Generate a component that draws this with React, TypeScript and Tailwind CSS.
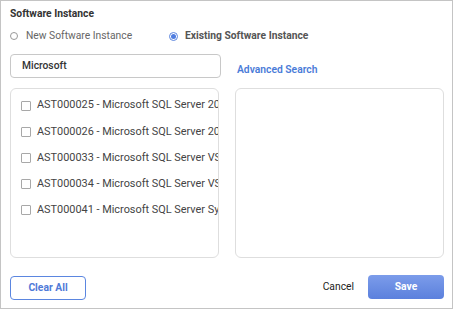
import React from 'react';

const items = [
  'AST000025 - Microsoft SQL Server 2019 Standard',
  'AST000026 - Microsoft SQL Server 2017 Enterprise',
  'AST000033 - Microsoft SQL Server VSS Writer',
  'AST000034 - Microsoft SQL Server VSS Writer 2019',
  'AST000041 - Microsoft SQL Server System CLR Types',
];

export default function App() {
  return (
    <div
      className="w-[453px] h-[309px] bg-white border border-[#c4c4c4] flex flex-col pl-[9px] pr-[8px] pt-[6px] text-[10.3px] text-[#333]"
      style={{ fontFamily: 'Roboto, "Liberation Sans", sans-serif' }}
    >
      {/* Title */}
      <div className="h-[13px] leading-[13px] font-bold text-[#333]">Software Instance</div>

      {/* Radios */}
      <div className="flex items-center h-[14px] mt-[9px]">
        <label className="flex items-center w-[159px]">
          <span className="w-[8px] h-[8px] rounded-full border border-[#999] bg-white" />
          <span className="ml-[8px] text-[#666]">New Software Instance</span>
        </label>
        <label className="flex items-center">
          <span className="w-[9px] h-[9px] rounded-full border border-[#5b85de] flex items-center justify-center">
            <span className="w-[5px] h-[5px] rounded-full bg-[#4f7de0]" />
          </span>
          <span className="ml-[7px] font-bold text-[#555]">Existing Software Instance</span>
        </label>
      </div>

      {/* Search row */}
      <div className="flex items-center mt-[11px]">
        <div className="w-[211px] h-[24px] border border-[#c8c8c8] rounded-[4px] flex items-center pl-[11px] font-medium text-[#333]">
          Microsoft
        </div>
        <span className="ml-[16px] mt-[8px] font-semibold text-[#4a7bd8]">Advanced Search</span>
      </div>

      {/* Lists */}
      <div className="flex gap-[16px] mt-[10px]">
        <div className="w-[209px] h-[170px] border border-[#dedede] rounded-[6px] pl-[10px] pt-[3px] overflow-hidden text-[10.9px]">
          {items.map((t, i) => (
            <div key={t} className={`flex items-center whitespace-nowrap ${i === 0 ? 'h-[27px]' : 'h-[26px]'}`}>
              <span className="w-[10px] h-[10px] shrink-0 border border-[#a8a8a8] rounded-[1px] bg-white" />
              <span className="ml-[6px] text-[#444]">{t}</span>
            </div>
          ))}
        </div>
        <div className="w-[209px] h-[170px] border border-[#dedede] rounded-[6px]" />
      </div>

      {/* Footer */}
      <div className="flex items-center mt-[15px]">
        <button className="w-[76px] h-[24px] border border-[#5b86e0] rounded-[4px] text-[#4f7ad8] font-bold mt-[3px]">
          Clear All
        </button>
        <span className="ml-auto text-[#222]">Cancel</span>
        <button className="ml-[14px] w-[76px] h-[24px] rounded-[4px] bg-gradient-to-b from-[#7c9cea] to-[#5b80dd] text-white font-bold">
          Save
        </button>
      </div>
    </div>
  );
}
